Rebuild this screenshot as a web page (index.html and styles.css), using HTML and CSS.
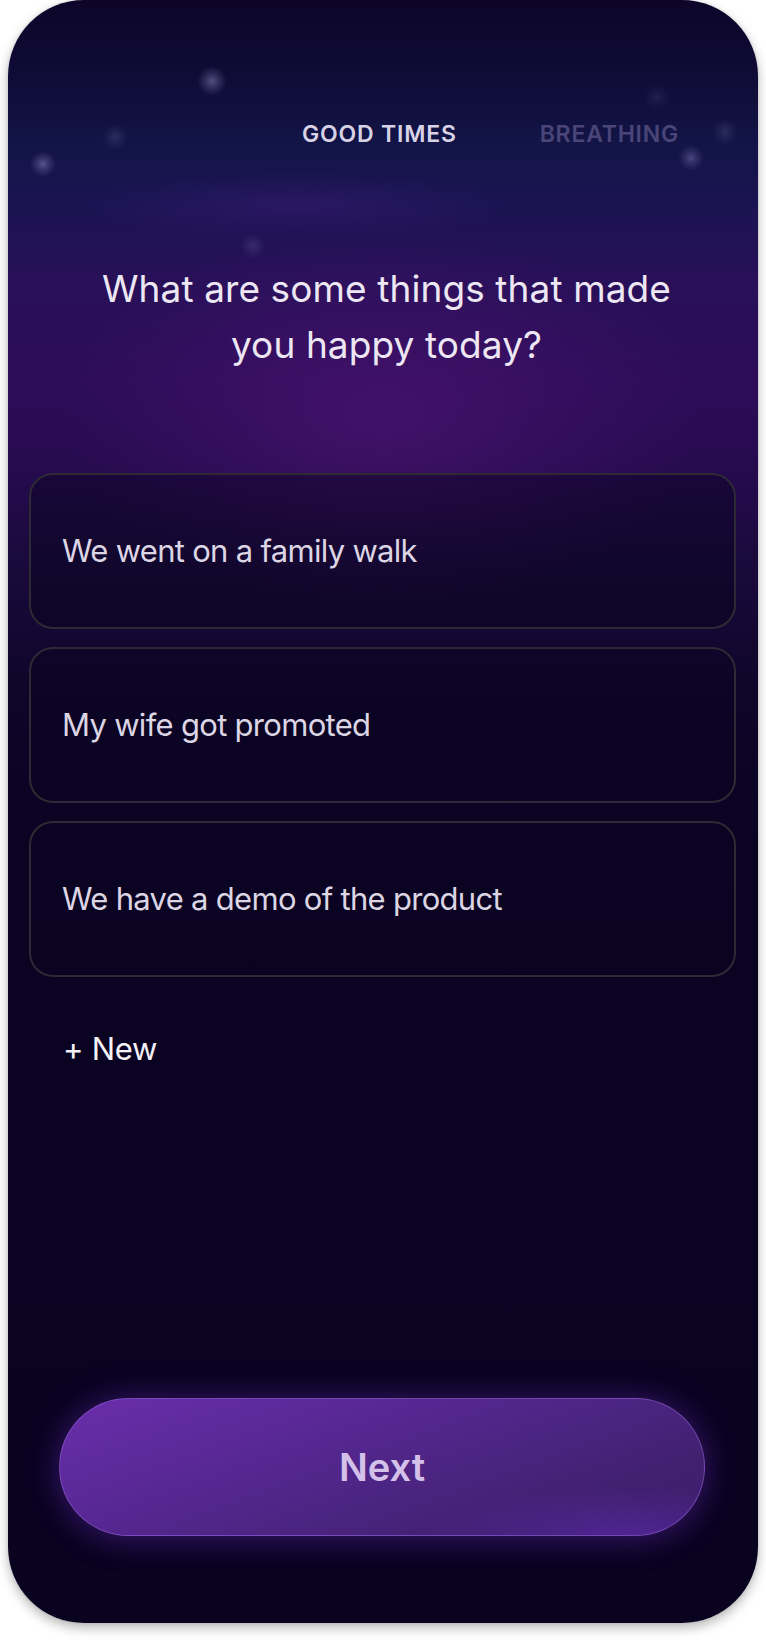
FILE: index.html
```html
<!DOCTYPE html>
<html lang="en">
<head>
<meta charset="utf-8">
<title>Good Times</title>
<link rel="stylesheet" href="styles.css">
</head>
<body>
<div class="phone">
  <div class="sky" aria-hidden="true">
    <span class="star s1"></span>
    <span class="star s2"></span>
    <span class="star s3"></span>
    <span class="star s4"></span>
    <span class="star s5"></span>
    <span class="star s6"></span>
    <span class="star s7"></span>
    <span class="nebula"></span>
  </div>
  <nav class="tabs">
    <span class="tab active">GOOD TIMES</span>
    <span class="tab">BREATHING</span>
  </nav>
  <h1 class="question">What are some things that made<br>you happy today?</h1>
  <ul class="entries">
    <li class="entry">We went on a family walk</li>
    <li class="entry">My wife got promoted</li>
    <li class="entry">We have a demo of the product</li>
  </ul>
  <div class="new">+ New</div>
  <button class="next">Next</button>
</div>
</body>
</html>
```
FILE: styles.css
```css
* { box-sizing: border-box; }
html, body { margin: 0; padding: 0; }
body {
  background: #ffffff;
  font-family: Inter, "Noto Sans", "Liberation Sans", sans-serif;
  width: 766px;
  height: 1640px;
}
.phone {
  position: relative;
  margin-left: 8px;
  width: 750px;
  height: 1623px;
  border-radius: 76px;
  overflow: hidden;
  display: flex;
  flex-direction: column;
  padding: 0 22px 0 21px;
  box-shadow: 0 5px 12px rgba(0, 0, 0, 0.28), 0 0 3px rgba(0, 0, 0, 0.12);
  background:
    radial-gradient(ellipse 430px 250px at 50% 420px, rgba(84, 22, 122, 0.55), rgba(84, 22, 122, 0) 75%),
    linear-gradient(180deg,
      #0d0529 0px,
      #0f0b35 70px,
      #121446 140px,
      #1a1452 200px,
      #281058 280px,
      #2d0c58 380px,
      #270b50 460px,
      #1a0a3c 560px,
      #0e0528 700px,
      #0a0322 840px,
      #0a0320 100%);
}
.sky {
  position: absolute;
  inset: 0;
  pointer-events: none;
}
.star {
  position: absolute;
  width: 26px;
  height: 26px;
  border-radius: 50%;
  background: radial-gradient(circle, rgba(165, 155, 215, 0.45) 0%, rgba(165, 155, 215, 0.2) 35%, rgba(165, 155, 215, 0) 70%);
  transform: translate(-50%, -50%);
}
.s1 { left: 204px; top: 81px; width: 30px; height: 30px; }
.s2 { left: 35px; top: 164px; }
.s3 { left: 107px; top: 137px; opacity: 0.4; }
.s4 { left: 245px; top: 246px; opacity: 0.4; }
.s5 { left: 683px; top: 158px; opacity: 0.8; }
.s6 { left: 717px; top: 132px; opacity: 0.4; }
.s7 { left: 649px; top: 97px; opacity: 0.25; }
.nebula {
  position: absolute;
  left: 80px;
  top: 170px;
  width: 420px;
  height: 70px;
  border-radius: 50%;
  background: radial-gradient(ellipse, rgba(70, 30, 130, 0.35), rgba(70, 30, 130, 0) 70%);
}
.tabs {
  position: relative;
  display: flex;
  gap: 83px;
  margin-top: 120px;
  padding-left: 273px;
  height: 28px;
  line-height: 28px;
  font-size: 23px;
  font-weight: 600;
  letter-spacing: 0.8px;
}
.tab { color: #4a4578; white-space: nowrap; }
.tab.active { color: #d8d2e6; }
.question {
  position: relative;
  margin: 113px 0 0;
  padding-left: 8px;
  text-align: center;
  font-size: 37px;
  line-height: 56px;
  font-weight: 400;
  letter-spacing: 0.1px;
  color: #ede7f4;
}
.entries {
  list-style: none;
  margin: 100px 0 0;
  padding: 0;
  display: flex;
  flex-direction: column;
  gap: 18px;
}
.entry {
  height: 156px;
  border: 2px solid #2d2a35;
  border-radius: 24px;
  display: flex;
  align-items: center;
  padding-left: 31px;
  font-size: 31px;
  line-height: 38px;
  letter-spacing: -0.7px;
  color: #dcd5e4;
  background: linear-gradient(180deg, rgba(10, 3, 32, 0.45), rgba(10, 3, 32, 0.6));
}
.new {
  margin-top: 53px;
  padding-left: 34px;
  font-size: 31px;
  line-height: 38px;
  letter-spacing: -0.3px;
  color: #f4f1f8;
}
.next {
  margin: auto 31px 87px 30px;
  height: 138px;
  border-radius: 69px;
  border: 1px solid rgba(150, 100, 215, 0.55);
  background:
    radial-gradient(ellipse 260px 60px at 88% 100%, rgba(90, 40, 170, 0.6), rgba(90, 40, 170, 0) 80%),
    linear-gradient(160deg, #6a2eac 0%, #54278f 40%, #41206f 80%, #3e1e6c 100%);
  box-shadow: 0 0 34px rgba(110, 50, 190, 0.35), 0 6px 30px rgba(80, 30, 150, 0.25);
  color: #d4c1ea;
  font-family: Inter, "Noto Sans", "Liberation Sans", sans-serif;
  font-size: 38px;
  font-weight: 600;
  cursor: pointer;
  padding: 0;
}
```
